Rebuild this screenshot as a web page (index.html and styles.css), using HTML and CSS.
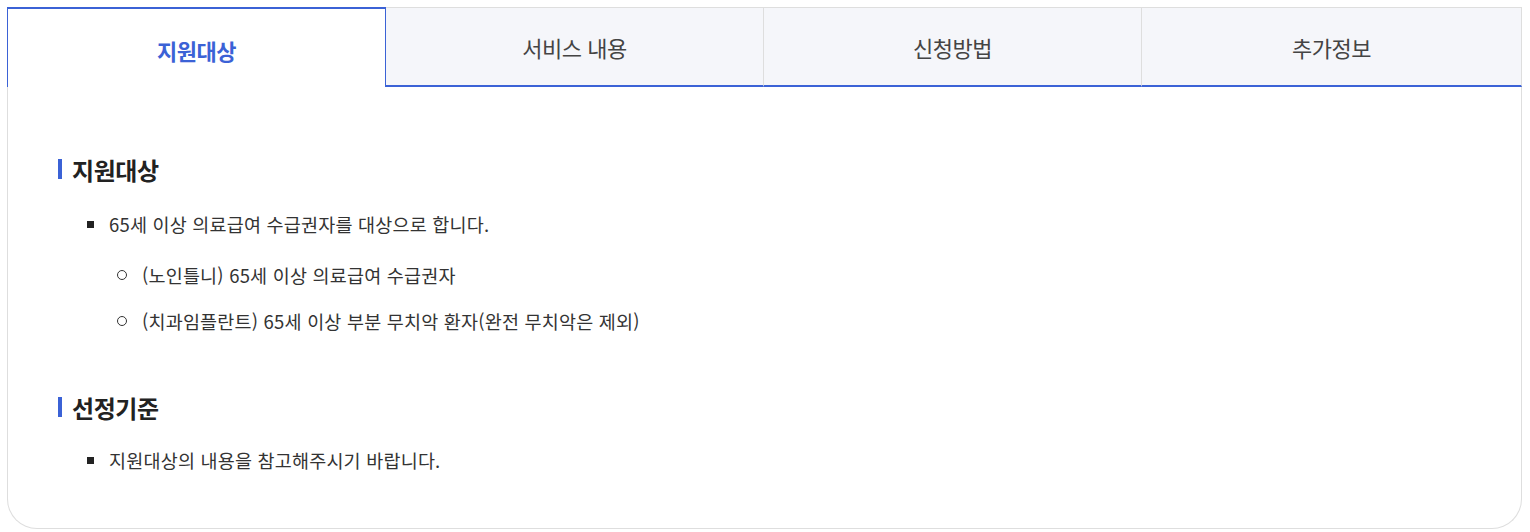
FILE: index.html
```html
<!DOCTYPE html>
<html lang="ko">
<head>
<meta charset="utf-8">
<title>지원대상</title>
<link rel="stylesheet" href="styles.css">
</head>
<body>
<div class="wrap">
  <div class="tabs">
    <div class="tab active">지원대상</div>
    <div class="tab">서비스 내용</div>
    <div class="tab">신청방법</div>
    <div class="tab last">추가정보</div>
  </div>
  <div class="panel">
    <section class="sec">
      <h3 class="sec-title"><span class="bar"></span>지원대상</h3>
      <ul class="list">
        <li class="item">
          <p class="line">65세 이상 의료급여 수급권자를 대상으로 합니다.</p>
          <ul class="sub">
            <li class="sub-item">(노인틀니) 65세 이상 의료급여 수급권자</li>
            <li class="sub-item">(치과임플란트) 65세 이상 부분 무치악 환자(완전 무치악은 제외)</li>
          </ul>
        </li>
      </ul>
    </section>
    <section class="sec sec2">
      <h3 class="sec-title"><span class="bar"></span>선정기준</h3>
      <ul class="list list2">
        <li class="item">
          <p class="line">지원대상의 내용을 참고해주시기 바랍니다.</p>
        </li>
      </ul>
    </section>
  </div>
</div>
</body>
</html>
```

FILE: styles.css
```css
* { box-sizing: border-box; }
html, body { margin: 0; padding: 0; background: #fff; }
body {
  font-family: "Noto Sans CJK KR", "Noto Sans", sans-serif;
  color: #333;
}
.wrap {
  width: 1515px;
  margin: 7px 0 0 7px;
}
.tabs {
  display: grid;
  grid-template-columns: 379px 378px 378px 380px;
  height: 80px;
}
.tab {
  display: flex;
  align-items: center;
  justify-content: center;
  background: #f5f6fa;
  border-top: 1px solid #dedede;
  border-right: 1px solid #dedede;
  border-bottom: 2px solid #3b62d6;
  font-size: 22px;
  letter-spacing: -0.5px;
  color: #444;
}
.tab.active {
  background: #fff;
  border-top: 2px solid #3b62d6;
  border-left: 1px solid #3b62d6;
  border-right: 1px solid #3b62d6;
  border-bottom: 0;
  color: #3b62d6;
  font-weight: 700;
  padding-top: 4px;
}
.panel {
  border: 1px solid #dedede;
  border-top: 0;
  border-radius: 0 0 30px 30px;
  height: 442px;
  padding: 67px 50px 0 50px;
}
.sec2 { margin-top: 57px; }
.sec-title {
  display: flex;
  align-items: center;
  margin: 0;
  height: 30px;
  font-size: 24px;
  font-weight: 700;
  letter-spacing: -0.4px;
  color: #222;
}
.bar {
  width: 4px;
  height: 20px;
  background: #3b62d6;
  margin-right: 10px;
}
.list {
  list-style: none;
  margin: 26px 0 0;
  padding: 0;
}
.list2 { margin-top: 24px; }
.line {
  display: flex;
  align-items: center;
  margin: 0;
  line-height: 28px;
  font-size: 18.5px;
  letter-spacing: 0.2px;
  color: #333;
}
.line::before {
  content: "";
  width: 7px;
  height: 7px;
  background: #222;
  margin: 0 15px 0 29px;
  flex: none;
}
.sub {
  list-style: none;
  margin: 23px 0 0;
  padding: 0 0 0 51px;
}
.sub-item {
  display: flex;
  align-items: center;
  line-height: 28px;
  font-size: 18.5px;
  letter-spacing: 0.2px;
  color: #333;
}
.sub-item + .sub-item { margin-top: 18px; }
.sub-item::before {
  content: "";
  width: 8px;
  height: 8px;
  border: 1px solid #333;
  border-radius: 50%;
  margin: 0 15px 0 8px;
  flex: none;
}
```
